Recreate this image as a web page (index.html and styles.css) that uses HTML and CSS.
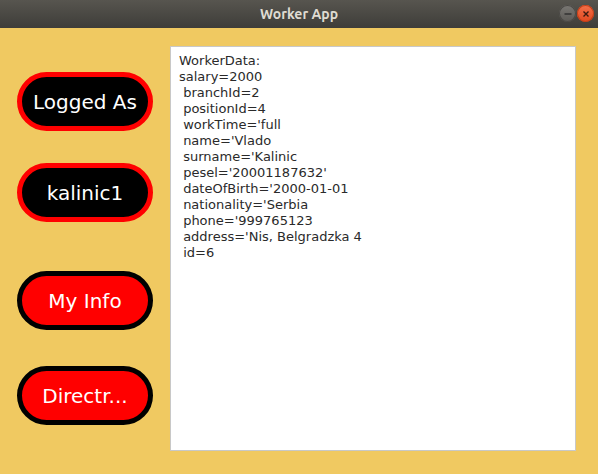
FILE: index.html
```html
<!DOCTYPE html>
<html>
<head>
<meta charset="utf-8">
<link rel="stylesheet" href="styles.css">
</head>
<body>
<div class="window">
  <div class="titlebar">
    <span class="title">Worker App</span>
    <div class="controls">
      <span class="ctl min"><svg width="16" height="16" viewBox="0 0 16 16"><line x1="4.5" y1="8" x2="11.5" y2="8" stroke="#2e2e2e" stroke-width="1.4"/></svg></span>
      <span class="ctl close"><svg width="16" height="16" viewBox="0 0 16 16"><path d="M5.5 5.5 L10.5 10.5 M10.5 5.5 L5.5 10.5" stroke="#3a1a10" stroke-width="1.4"/></svg></span>
    </div>
  </div>
  <div class="content">
    <div class="side">
      <div class="btn dark b1">Logged As</div>
      <div class="btn dark b2">kalinic1</div>
      <div class="btn red b3">My Info</div>
      <div class="btn red b4">Directr...</div>
    </div>
    <div class="area"><pre class="data">WorkerData:
salary=2000
 branchId=2
 positionId=4
 workTime='full
 name='Vlado
 surname='Kalinic
 pesel='20001187632'
 dateOfBirth='2000-01-01
 nationality='Serbia
 phone='999765123
 address='Nis, Belgradzka 4
 id=6</pre></div>
  </div>
</div>
</body>
</html>
```
FILE: styles.css
```css
html, body { margin: 0; padding: 0; }
body { width: 598px; height: 474px; overflow: hidden; background: #f0c961; }
.window { width: 598px; height: 474px; display: flex; flex-direction: column; }
.titlebar {
  height: 28px; flex: none; position: relative;
  background: linear-gradient(#57554f, #3e3d39);
  display: flex; align-items: center; justify-content: center;
}
.title { font-family: "Ubuntu", "DejaVu Sans", sans-serif; font-weight: bold; font-size: 14px; color: #dfdbd2; letter-spacing: 0; }
.controls { position: absolute; right: 4px; top: 5px; display: flex; gap: 1px; }
.ctl { width: 17px; height: 17px; border-radius: 50%; display: flex; align-items: center; justify-content: center; }
.ctl svg { display: block; }
.min { background: linear-gradient(#7a7874, #5c5a56); box-shadow: inset 0 0 0 1px #4a4845; }
.close { background: linear-gradient(#f4714a, #e0481f); box-shadow: inset 0 0 0 1px #c23e18; }
.content { flex: 1; display: flex; background: #f0c961; }
.side { width: 170px; flex: none; display: flex; flex-direction: column; align-items: flex-start; }
.btn {
  width: 136px; height: 59px; box-sizing: border-box; margin-left: 17px;
  border-radius: 30px; border: 5px solid; display: flex; align-items: center; justify-content: center;
  font-family: "DejaVu Sans", sans-serif; font-size: 20px; color: #ffffff;
}
.dark { background: #000; border-color: #ff0000; }
.red { background: #ff0000; border-color: #000; }
.b1 { margin-top: 44px; }
.b2 { margin-top: 32px; }
.b3 { margin-top: 49px; }
.b4 { margin-top: 36px; }
.area {
  margin-top: 18px; width: 406px; height: 405px; box-sizing: border-box;
  background: #fff; border: 1px solid #c8c8c8;
}
.data {
  margin: 0; padding: 6px 0 0 8px;
  font-family: "DejaVu Sans", sans-serif; font-size: 13px; line-height: 16px; color: #2a2a2a;
}
```
